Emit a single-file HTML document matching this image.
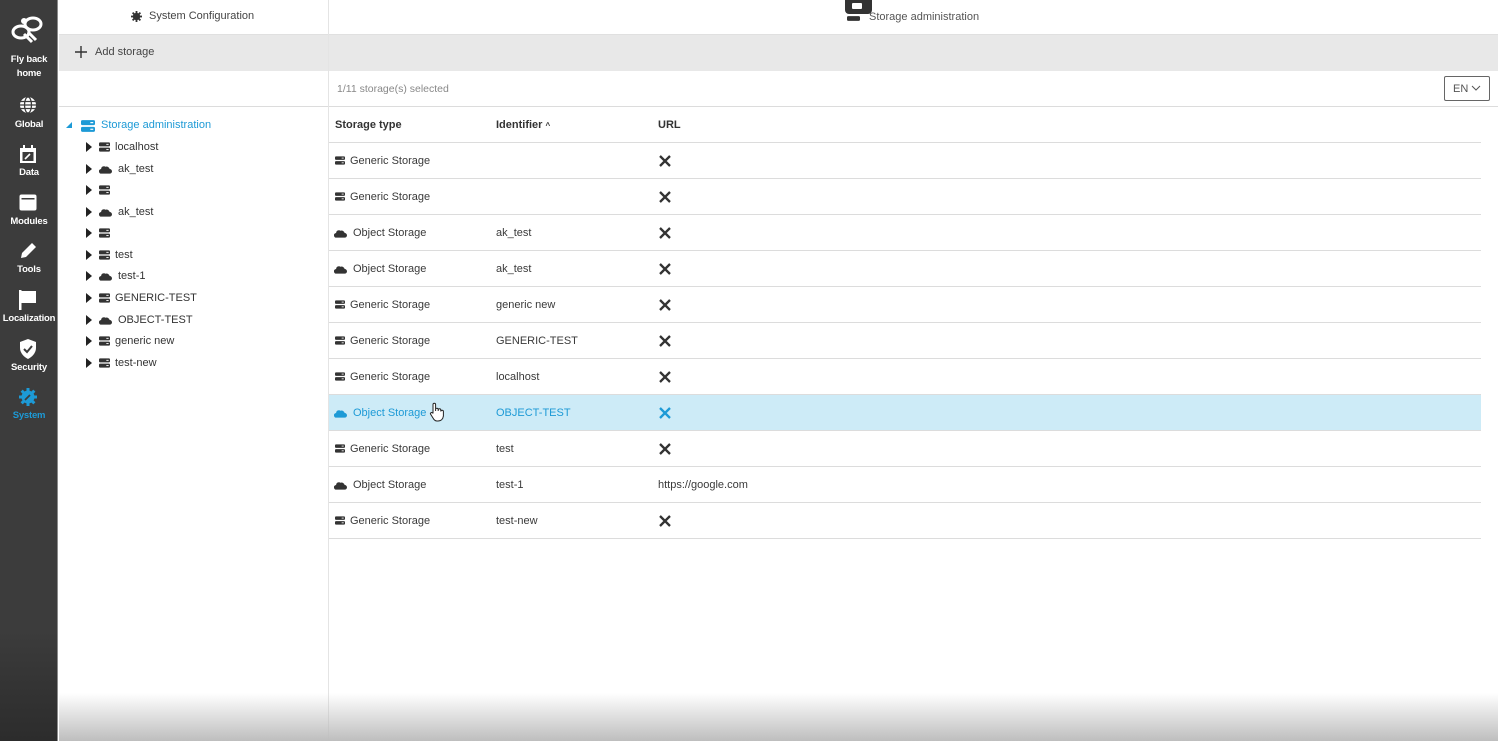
<!DOCTYPE html>
<html><head><meta charset="utf-8"><style>
*{margin:0;padding:0;box-sizing:border-box}
body{width:1498px;height:741px;overflow:hidden;background:#fff;font-family:"Liberation Sans",Arial,sans-serif;font-size:11px;color:#3a3a3a;position:relative}
.abs{position:absolute}
#side{left:0;top:0;width:58px;height:741px;background:linear-gradient(#3c3c3c 85%,#2c2c2c);border-right:1px solid #8a8a8a}
.nl{position:absolute;left:0;width:58px;text-align:center;color:#fff;font-size:9.5px;font-weight:bold;letter-spacing:-0.2px}
.ni{position:absolute;left:19px}
.row{position:absolute;left:329px;width:1152px;height:36px;border-bottom:1px solid #dcdcdc}
.row span{position:absolute;top:12px}
.c1{left:6px}.c2{left:167px}.c3{left:329px}
.x{position:absolute;left:329px;top:11px}
.tr{position:absolute;left:86px;height:14px}
.tr .t{position:absolute;left:0;top:0;width:0;height:0;border-top:5px solid transparent;border-bottom:5px solid transparent;border-left:6px solid #222}
.tr .lbl{position:absolute;top:-1px;white-space:nowrap;font-size:11px;color:#333}
</style></head><body>
<svg width="0" height="0" style="position:absolute"><defs>
<symbol id="srv" viewBox="0 0 12 10"><rect x="0" y="0" width="12" height="4.3" rx="1.2" fill="currentColor"/><rect x="0" y="5.7" width="12" height="4.3" rx="1.2" fill="currentColor"/><rect x="8" y="1.6" width="2.5" height="1" fill="#fff"/><rect x="8" y="7.3" width="2.5" height="1" fill="#fff"/></symbol>
<symbol id="cld" viewBox="0 0 14 9"><path d="M2.5 9 A2.5 2.5 0 0 1 2.3 4 A3 3 0 0 1 7 1.5 A3.5 3.5 0 0 1 11.5 4 A2.5 2.5 0 0 1 11.5 9 Z" fill="currentColor"/></symbol>
<symbol id="xx" viewBox="0 0 14 14"><path d="M2 2 L12 12 M12 2 L2 12" stroke="currentColor" stroke-width="2.3" fill="none"/></symbol>
</defs></svg>

<div id="side" class="abs">
 <svg class="ni" style="left:10px;top:12px" width="34" height="34" viewBox="0 0 34 34"><g fill="none" stroke="#fff" stroke-width="3"><ellipse cx="11" cy="20" rx="8" ry="6"/><ellipse cx="23" cy="12" rx="8" ry="6"/><path d="M14 22 L22 30 M18 20 L26 28"/></g><circle cx="14" cy="9" r="3" fill="#fff"/></svg>
 <div class="nl" style="top:53px;line-height:14px">Fly back<br>home</div>
 <svg class="ni" style="top:96px" width="18" height="18" viewBox="0 0 18 18"><circle cx="9" cy="9" r="8" fill="#fff"/><g stroke="#3c3c3c" stroke-width="1.3" fill="none"><path d="M1 9H17M1 5.5H17M1 12.5H17"/><ellipse cx="9" cy="9" rx="3.5" ry="8"/></g></svg>
 <div class="nl" style="top:119px">Global</div>
 <svg class="ni" style="top:145px" width="18" height="19" viewBox="0 0 18 19"><rect x="1" y="3" width="16" height="15" fill="#fff"/><rect x="3.5" y="7" width="11" height="9" fill="#3c3c3c"/><rect x="4" y="0" width="2" height="4" fill="#fff"/><rect x="12" y="0" width="2" height="4" fill="#fff"/><path d="M6 14 L11 9" stroke="#fff" stroke-width="1.6"/></svg>
 <div class="nl" style="top:167px">Data</div>
 <svg class="ni" style="top:194px" width="18" height="17" viewBox="0 0 18 17"><rect x="0.5" y="0.5" width="17" height="16" rx="2" fill="#fff"/><rect x="2.5" y="4" width="13" height="1.5" fill="#3c3c3c"/></svg>
 <div class="nl" style="top:216px">Modules</div>
 <svg class="ni" style="top:242px" width="18" height="18" viewBox="0 0 18 18"><path d="M2 16 L3 11 L13 1 L17 5 L7 15 Z" fill="#fff"/></svg>
 <div class="nl" style="top:264px">Tools</div>
 <svg class="ni" style="top:290px" width="18" height="20" viewBox="0 0 18 20"><rect x="0" y="0" width="2.5" height="20" fill="#fff"/><path d="M2.5 1 H17 V13 H2.5 Z" fill="#fff"/></svg>
 <div class="nl" style="top:313px">Localization</div>
 <svg class="ni" style="top:339px" width="18" height="20" viewBox="0 0 18 20"><path d="M9 0 L17 3 V9 C17 14 13 18 9 20 C5 18 1 14 1 9 V3 Z" fill="#fff"/><path d="M5 10 L8 13 L13 7" stroke="#3c3c3c" stroke-width="2" fill="none"/></svg>
 <div class="nl" style="top:362px">Security</div>
 <svg class="ni" style="top:388px" width="18" height="18" viewBox="0 0 18 18"><circle cx="9" cy="9" r="6.5" fill="#1d9ad6"/><g fill="#1d9ad6"><rect x="7.5" y="0" width="3" height="18"/><rect x="0" y="7.5" width="18" height="3"/><rect x="7.5" y="0" width="3" height="18" transform="rotate(45 9 9)"/><rect x="7.5" y="0" width="3" height="18" transform="rotate(-45 9 9)"/></g><path d="M6 12 L11 7" stroke="#3c3c3c" stroke-width="1.8"/></svg>
 <div class="nl" style="top:410px;color:#1d9ad6">System</div>
</div>

<div class="abs" style="left:59px;top:0;width:270px;height:35px;border-bottom:1px solid #e0e0e0">
 <svg class="abs" style="left:72px;top:11px" width="11" height="11" viewBox="0 0 18 18"><circle cx="9" cy="9" r="6" fill="#333"/><g fill="#333"><rect x="7.5" y="0" width="3" height="18"/><rect x="0" y="7.5" width="18" height="3"/><rect x="7.5" y="0" width="3" height="18" transform="rotate(45 9 9)"/><rect x="7.5" y="0" width="3" height="18" transform="rotate(-45 9 9)"/></g></svg>
 <span class="abs" style="left:90px;top:10px;color:#444">System Configuration</span>
</div>
<div class="abs" style="left:59px;top:35px;width:1439px;height:36px;background:#e8e8e8"></div>
<svg class="abs" style="left:75px;top:46px" width="12" height="12" viewBox="0 0 12 12"><path d="M6 0V12M0 6H12" stroke="#333" stroke-width="1.4"/></svg>
<span class="abs" style="left:95px;top:46px;color:#444">Add storage</span>
<div class="abs" style="left:59px;top:106px;width:270px;height:1px;background:#dcdcdc"></div>
<div class="abs" style="left:328px;top:0;width:1px;height:741px;background:#e4e4e4"></div>

<div class="abs" style="left:66px;top:122px;width:0;height:0;border-left:6px solid transparent;border-bottom:6px solid #1d9ad6"></div>
<svg class="abs" style="left:81px;top:120px;color:#1d9ad6" width="14" height="12"><use href="#srv"/></svg>
<span class="abs" style="left:101px;top:119px;color:#1d9ad6">Storage administration</span>

<div class="tr" style="top:142px"><div class="t"></div><svg class="abs" style="left:13px;top:0px;color:#333" width="11" height="10"><use href="#srv"/></svg><span class="lbl" style="left:29px">localhost</span></div>
<div class="tr" style="top:164px"><div class="t"></div><svg class="abs" style="left:13px;top:1px;color:#333" width="13" height="9"><use href="#cld"/></svg><span class="lbl" style="left:32px">ak_test</span></div>
<div class="tr" style="top:185px"><div class="t"></div><svg class="abs" style="left:13px;top:0px;color:#333" width="11" height="10"><use href="#srv"/></svg></div>
<div class="tr" style="top:207px"><div class="t"></div><svg class="abs" style="left:13px;top:1px;color:#333" width="13" height="9"><use href="#cld"/></svg><span class="lbl" style="left:32px">ak_test</span></div>
<div class="tr" style="top:228px"><div class="t"></div><svg class="abs" style="left:13px;top:0px;color:#333" width="11" height="10"><use href="#srv"/></svg></div>
<div class="tr" style="top:250px"><div class="t"></div><svg class="abs" style="left:13px;top:0px;color:#333" width="11" height="10"><use href="#srv"/></svg><span class="lbl" style="left:29px">test</span></div>
<div class="tr" style="top:271px"><div class="t"></div><svg class="abs" style="left:13px;top:1px;color:#333" width="13" height="9"><use href="#cld"/></svg><span class="lbl" style="left:32px">test-1</span></div>
<div class="tr" style="top:293px"><div class="t"></div><svg class="abs" style="left:13px;top:0px;color:#333" width="11" height="10"><use href="#srv"/></svg><span class="lbl" style="left:29px">GENERIC-TEST</span></div>
<div class="tr" style="top:315px"><div class="t"></div><svg class="abs" style="left:13px;top:1px;color:#333" width="13" height="9"><use href="#cld"/></svg><span class="lbl" style="left:32px">OBJECT-TEST</span></div>
<div class="tr" style="top:336px"><div class="t"></div><svg class="abs" style="left:13px;top:0px;color:#333" width="11" height="10"><use href="#srv"/></svg><span class="lbl" style="left:29px">generic new</span></div>
<div class="tr" style="top:358px"><div class="t"></div><svg class="abs" style="left:13px;top:0px;color:#333" width="11" height="10"><use href="#srv"/></svg><span class="lbl" style="left:29px">test-new</span></div>

<div class="abs" style="left:329px;top:0;width:1169px;height:35px;border-bottom:1px solid #e0e0e0"></div>
<div class="abs" style="left:845px;top:0;width:27px;height:14px;background:#333;border-radius:0 0 4px 4px"></div>
<div class="abs" style="left:852px;top:3px;width:10px;height:6px;background:#fff;border-radius:1px"></div>
<svg class="abs" style="left:847px;top:16px;color:#333" width="13" height="5" viewBox="0 0 12 4.3"><rect width="12" height="4.3" rx="1.2" fill="currentColor"/></svg>
<span class="abs" style="left:869px;top:11px;color:#555">Storage administration</span>

<span class="abs" style="left:337px;top:83px;color:#888;font-size:10.5px">1/11 storage(s) selected</span>
<div class="abs" style="left:1444px;top:76px;width:46px;height:25px;border:1px solid #666;border-radius:2px;color:#555;font-size:11px;padding:6px 0 0 8px">EN <svg width="10" height="6" viewBox="0 0 10 6" style="vertical-align:1px"><path d="M1 1 L5 5 L9 1" stroke="#555" fill="none" stroke-width="1"/></svg></div>

<div class="abs" style="left:329px;top:106px;width:1169px;height:1px;background:#dcdcdc"></div>
<div class="row" style="top:107px;color:#333;font-weight:bold"><span class="c1">Storage type</span><span class="c2">Identifier <span style="position:static;font-size:8px">^</span></span><span class="c3">URL</span></div>

<div class="row" style="top:143px"><svg class="abs" style="left:6px;top:13px;color:#333" width="10" height="9"><use href="#srv"/></svg><span style="left:21px">Generic Storage</span><svg class="x" width="14" height="14" style="color:#333"><use href="#xx"/></svg></div>
<div class="row" style="top:179px"><svg class="abs" style="left:6px;top:13px;color:#333" width="10" height="9"><use href="#srv"/></svg><span style="left:21px">Generic Storage</span><svg class="x" width="14" height="14" style="color:#333"><use href="#xx"/></svg></div>
<div class="row" style="top:215px"><svg class="abs" style="left:5px;top:14px;color:#333" width="13" height="9"><use href="#cld"/></svg><span style="left:24px">Object Storage</span><span class="c2">ak_test</span><svg class="x" width="14" height="14" style="color:#333"><use href="#xx"/></svg></div>
<div class="row" style="top:251px"><svg class="abs" style="left:5px;top:14px;color:#333" width="13" height="9"><use href="#cld"/></svg><span style="left:24px">Object Storage</span><span class="c2">ak_test</span><svg class="x" width="14" height="14" style="color:#333"><use href="#xx"/></svg></div>
<div class="row" style="top:287px"><svg class="abs" style="left:6px;top:13px;color:#333" width="10" height="9"><use href="#srv"/></svg><span style="left:21px">Generic Storage</span><span class="c2">generic new</span><svg class="x" width="14" height="14" style="color:#333"><use href="#xx"/></svg></div>
<div class="row" style="top:323px"><svg class="abs" style="left:6px;top:13px;color:#333" width="10" height="9"><use href="#srv"/></svg><span style="left:21px">Generic Storage</span><span class="c2">GENERIC-TEST</span><svg class="x" width="14" height="14" style="color:#333"><use href="#xx"/></svg></div>
<div class="row" style="top:359px"><svg class="abs" style="left:6px;top:13px;color:#333" width="10" height="9"><use href="#srv"/></svg><span style="left:21px">Generic Storage</span><span class="c2">localhost</span><svg class="x" width="14" height="14" style="color:#333"><use href="#xx"/></svg></div>
<div class="row" style="top:395px;background:#cdebf7;color:#1d9ad6"><svg class="abs" style="left:5px;top:14px;color:#1d9ad6" width="13" height="9"><use href="#cld"/></svg><span style="left:24px">Object Storage</span><span class="c2">OBJECT-TEST</span><svg class="x" width="14" height="14" style="color:#1d9ad6"><use href="#xx"/></svg>
<svg class="abs" style="left:100px;top:7px" width="16" height="20" viewBox="0 0 16 20"><path d="M4 11 V2.5 a1.3 1.3 0 0 1 2.6 0 V9 V7.5 a1.3 1.3 0 0 1 2.6 0 V9 V8 a1.3 1.3 0 0 1 2.6 0 V9.5 a1.3 1.3 0 0 1 2.6 0 V14 C14 17 12 19 9 19 H8 C6 19 5 18 4 16 L1.5 12 C1 11 2.5 10 3.5 11 Z" fill="#fff" stroke="#222" stroke-width="1"/></svg></div>
<div class="row" style="top:431px"><svg class="abs" style="left:6px;top:13px;color:#333" width="10" height="9"><use href="#srv"/></svg><span style="left:21px">Generic Storage</span><span class="c2">test</span><svg class="x" width="14" height="14" style="color:#333"><use href="#xx"/></svg></div>
<div class="row" style="top:467px"><svg class="abs" style="left:5px;top:14px;color:#333" width="13" height="9"><use href="#cld"/></svg><span style="left:24px">Object Storage</span><span class="c2">test-1</span><span class="c3">https://google.com</span></div>
<div class="row" style="top:503px"><svg class="abs" style="left:6px;top:13px;color:#333" width="10" height="9"><use href="#srv"/></svg><span style="left:21px">Generic Storage</span><span class="c2">test-new</span><svg class="x" width="14" height="14" style="color:#333"><use href="#xx"/></svg></div>

<div class="abs" style="left:59px;top:693px;width:1439px;height:48px;background:linear-gradient(rgba(255,255,255,0),rgba(190,190,190,1))"></div>
</body></html>
